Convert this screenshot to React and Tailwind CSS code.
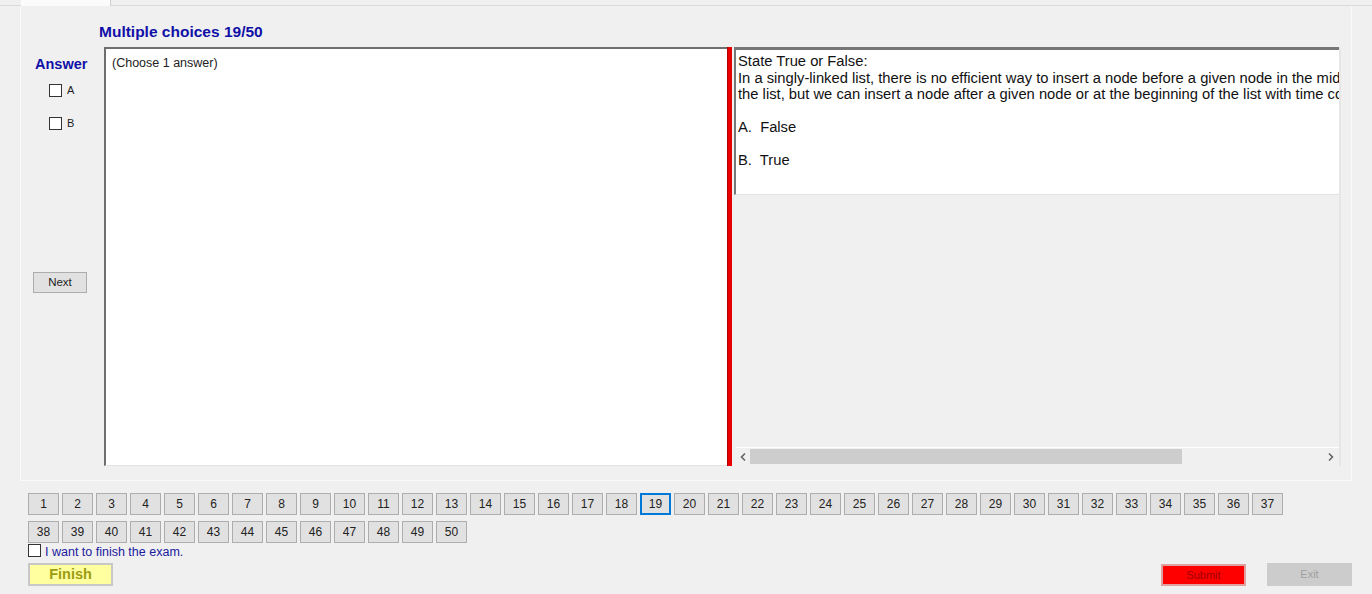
const row1 = Array.from({ length: 37 }, (_, i) => i + 1)
const row2 = Array.from({ length: 13 }, (_, i) => i + 38)

function NumButton({ n }) {
  const active = n === 19
  return (
    <div
      className={`w-[31px] h-[22px] flex items-center justify-center text-[12px] text-[#222] bg-[#e1e1e1] ${
        active ? 'border-2 border-[#0078d7]' : 'border border-[#adadad]'
      }`}
    >
      {n}
    </div>
  )
}

function Check({ label }) {
  return (
    <div className="h-[13px] flex items-center gap-[5px] leading-none">
      <div className="w-[13px] h-[13px] bg-white border border-[#333]" />
      <span className="text-[11px] text-[#222]">{label}</span>
    </div>
  )
}

export default function App() {
  return (
    <div
      className="w-[1372px] h-[594px] bg-[#f0f0f0] overflow-hidden text-[#111]"
      style={{ fontFamily: '"Liberation Sans", Arial, sans-serif' }}
    >
      {/* Tab strip */}
      <div className="h-[6px] pl-[21px] border-b border-[#dadada]">
        <div className="w-[90px] h-[6px] bg-[#fbfbfb] border-r border-[#d0d0d0]" />
      </div>

      {/* Tab page */}
      <div className="ml-[20px] w-[1332px] h-[475px] border border-[#fafafa] border-t-0 pt-[17px]">
        <div className="h-[24px] pl-[78px] text-[15.5px] leading-[18px] font-bold text-[#1010a8]">Multiple choices 19/50</div>

        <div className="flex">
          {/* Answer column */}
          <div className="w-[83px] flex flex-col">
            <div className="mt-[8px] h-[18px] pl-[14px] text-[14.5px] leading-[18px] font-bold text-[#1010a8]">Answer</div>
            <div className="mt-[11px] pl-[28px]">
              <Check label="A" />
            </div>
            <div className="mt-[20px] pl-[28px]">
              <Check label="B" />
            </div>
            <div className="mt-[142px] ml-[12px] w-[54px] h-[21px] bg-[#e1e1e1] border border-[#adadad] flex items-center justify-center text-[11.5px] text-[#222]">
              Next
            </div>
          </div>

          {/* Answer text box */}
          <div className="w-[623px] h-[419px] bg-white border-l-2 border-t-2 border-[#6e6e6e] border-b border-b-[#e3e3e3] pl-[6px] pt-[5px] text-[12.5px] text-[#222]">
            (Choose 1 answer)
          </div>

          {/* Splitter */}
          <div className="w-[5px] h-[419px] bg-[#e80000] border-l border-[#b00000]" />

          {/* Question pane */}
          <div className="w-[609px] h-[419px] flex flex-col border-r-2 border-[#e6e6e6]">
            <div className="h-[148px] ml-[2px] bg-white border-t-[3px] border-l-2 border-[#777] border-b border-b-[#e3e3e3] overflow-hidden pl-[2px] pt-[3px] text-[14.75px] leading-[16.5px] text-[#111] whitespace-pre">
              <div>State True or False:</div>
              <div>In a singly-linked list, there is no efficient way to insert a node before a given node in the middle of the list,</div>
              <div>the list, but we can insert a node after a given node or at the beginning of the list with time complexity O(1).</div>
              <div>&nbsp;</div>
              <div>A.  False</div>
              <div>&nbsp;</div>
              <div>B.  True</div>
            </div>
            <div className="flex-1" />
            {/* Horizontal scrollbar */}
            <div className="h-[18px] ml-[4px] mb-[1px] border-t border-white flex items-center bg-[#f0f0f0]">
              <div className="w-[14px] flex justify-center">
                <svg width="6" height="8" viewBox="0 0 6 8">
                  <path d="M5 0.5 L1.5 4 L5 7.5" fill="none" stroke="#606060" strokeWidth="1.5" />
                </svg>
              </div>
              <div className="w-[432px] h-[15px] bg-[#cdcdcd]" />
              <div className="flex-1" />
              <div className="w-[16px] flex justify-center">
                <svg width="6" height="8" viewBox="0 0 6 8">
                  <path d="M1 0.5 L4.5 4 L1 7.5" fill="none" stroke="#606060" strokeWidth="1.5" />
                </svg>
              </div>
            </div>
          </div>
        </div>
      </div>

      {/* Question navigation */}
      <div className="pl-[28px] pt-[12px] flex flex-col gap-[6px]">
        <div className="flex gap-[3px]">
          {row1.map(n => (
            <NumButton key={n} n={n} />
          ))}
        </div>
        <div className="flex gap-[3px]">
          {row2.map(n => (
            <NumButton key={n} n={n} />
          ))}
        </div>
      </div>

      <div className="pl-[28px] mt-[1px] h-[13px] flex items-center gap-[4px] leading-none">
        <div className="w-[13px] h-[13px] bg-white border border-[#333]" />
        <span className="text-[12.5px] text-[#1a1aa0] mt-[3px]">I want to finish the exam.</span>
      </div>

      <div className="pl-[28px] pr-[20px] mt-[6px] flex items-start">
        <div className="w-[85px] h-[23px] bg-[#ffffa0] border-2 border-[#c8c8c8] flex items-center justify-center text-[14.5px] font-bold text-[#9c9c10]">
          Finish
        </div>
        <div className="flex-1" />
        <div className="mt-[1px] w-[85px] h-[22px] bg-[#ff0000] border-2 border-[#e0a0a0] flex items-center justify-center text-[11px] text-[#a00000]">
          Submit
        </div>
        <div className="ml-[21px] w-[85px] h-[23px] bg-[#cccccc] flex items-center justify-center text-[11px] text-[#a0a0a0]">
          Exit
        </div>
      </div>
    </div>
  )
}
